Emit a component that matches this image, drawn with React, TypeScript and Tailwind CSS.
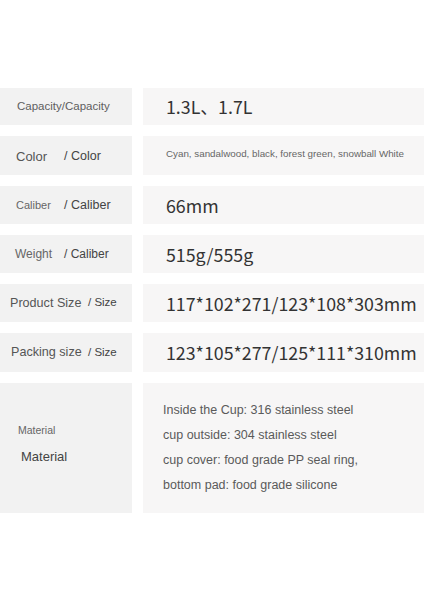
import React from 'react';

// Spec table rows: left label (main + suffix), right value
type Row = {
    label: React.ReactNode;
    value: React.ReactNode;
    h: string;
};

const arial = { fontFamily: '"Liberation Sans", Arial, sans-serif' };
const cjk = { fontFamily: '"Noto Sans CJK SC", "Noto Sans", sans-serif' };

const Big = ({ children }: { children: React.ReactNode }) => (
    <span style={cjk} className="text-[17.8px] text-[#333333]">
        {children}
    </span>
);

const rows: Row[] = [
    {
        h: 'h-[37px]',
        label: <span className="pl-[17px] text-[11.5px] text-[#5e5e5e]">Capacity/Capacity</span>,
        value: <Big>1.3L、1.7L</Big>,
    },
    {
        h: 'h-[39px]',
        label: (
            <div className="flex items-center pl-[16px] pt-[2px]">
                <span className="w-[48px] text-[13px] text-[#555555]">Color</span>
                <span className="text-[12.5px] text-[#444444] font-medium">/ Color</span>
            </div>
        ),
        value: <span className="text-[9.8px] text-[#666666] -mt-[3px]">Cyan, sandalwood, black, forest green, snowball White</span>,
    },
    {
        h: 'h-[38px]',
        label: (
            <div className="flex items-center pl-[16px]">
                <span className="w-[48px] text-[11px] text-[#666666]">Caliber</span>
                <span className="text-[12.5px] text-[#444444] font-medium">/ Caliber</span>
            </div>
        ),
        value: <Big>66mm</Big>,
    },
    {
        h: 'h-[38px]',
        label: (
            <div className="flex items-center pl-[15px]">
                <span className="w-[49px] text-[12px] text-[#666666] -mt-[1px]">Weight</span>
                <span className="text-[12px] text-[#444444] font-medium">/ Caliber</span>
            </div>
        ),
        value: <Big>515g/555g</Big>,
    },
    {
        h: 'h-[38px]',
        label: (
            <div className="flex items-center pl-[10px]">
                <span className="w-[78px] text-[12.6px] text-[#555555]">Product Size</span>
                <span className="text-[11.5px] text-[#444444] font-medium">/ Size</span>
            </div>
        ),
        value: <Big>117*102*271/123*108*303mm</Big>,
    },
    {
        h: 'h-[39px]',
        label: (
            <div className="flex items-center pl-[11px]">
                <span className="w-[77px] text-[12.6px] text-[#555555] -mt-[1px]">Packing size</span>
                <span className="text-[11.5px] text-[#444444] font-medium">/ Size</span>
            </div>
        ),
        value: <Big>123*105*277/125*111*310mm</Big>,
    },
];

export default function App() {
    return (
        <div style={arial} className="w-[424px] h-[600px] bg-white pt-[88px]">
            <div className="grid grid-cols-[132px_1fr] gap-x-[11px] gap-y-[11px]">
                {rows.map((r, i) => (
                    <React.Fragment key={i}>
                        <div className={`${r.h} bg-[#f2f2f2] flex items-center`}>{r.label}</div>
                        <div className={`${r.h} bg-[#f7f6f6] flex items-center pl-[23px]`}>{r.value}</div>
                    </React.Fragment>
                ))}

                {/* Material block */}
                <div className="h-[130px] bg-[#f2f2f2] flex flex-col justify-center pb-[7px]">
                    <span className="pl-[18px] text-[10.5px] text-[#666666]">Material</span>
                    <span className="pl-[21px] mt-[8px] text-[13px] text-[#444444] font-medium">Material</span>
                </div>
                <div className="h-[130px] bg-[#f7f6f6] flex flex-col justify-center pl-[20px] gap-[10px] text-[12.5px] text-[#5a5a5a]">
                    <span className="leading-[15px]">Inside the Cup: 316 stainless steel</span>
                    <span className="leading-[15px]">cup outside: 304 stainless steel</span>
                    <span className="leading-[15px]">cup cover: food grade PP seal ring,</span>
                    <span className="leading-[15px]">bottom pad: food grade silicone</span>
                </div>
            </div>
        </div>
    );
}
